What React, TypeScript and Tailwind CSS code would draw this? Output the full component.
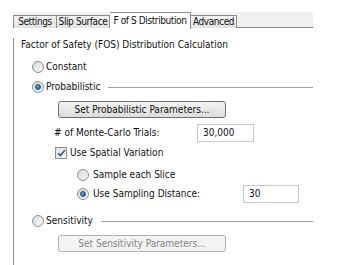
import React from "react";

const tabs = [
  { label: "Settings", w: "w-[44px]", active: false, first: true },
  { label: "Slip Surface", w: "w-[53px]", active: false, first: false },
  { label: "F of S Distribution", w: "w-[81px]", active: true, first: false },
  { label: "Advanced", w: "w-[46px]", active: false, first: false },
];

const Radio = ({ checked }: { checked?: boolean }) => (
  <span className="flex h-[12px] w-[12px] shrink-0 items-center justify-center rounded-full border border-[#8e8f8f] bg-gradient-to-br from-[#d9d9d9] to-[#fafafa]">
    {checked && (
      <span className="h-[6px] w-[6px] rounded-full border border-[#1d4a7a] bg-gradient-to-br from-[#7ab3e6] to-[#1b5fa6]" />
    )}
  </span>
);

const Checkbox = () => (
  <span className="flex h-[12px] w-[12px] shrink-0 items-center justify-center border border-[#8e8f8f] bg-gradient-to-br from-[#e3e3e3] to-[#fbfbfb]">
    <svg width="9" height="8" viewBox="0 0 9 8">
      <path d="M1 4.2 L3.4 6.6 L8 1" fill="none" stroke="#2a5896" strokeWidth="1.6" />
    </svg>
  </span>
);

const GroupLine = () => <div className="ml-[8px] h-px flex-1 bg-[#a0a0a0]" />;

export default function App() {
  return (
    <div
      className="relative h-[265px] w-[357px] overflow-hidden bg-white text-[10px] leading-[14px] text-[#111]"
      style={{ fontFamily: "Tahoma, 'DejaVu Sans Condensed', 'Liberation Sans', sans-serif" }}
    >
      {/* tab strip */}
      <div className="ml-[13px] mt-[12px] flex h-[17px] w-[300px] items-start tracking-[-0.4px]">
        {tabs.map((t) =>
          t.active ? (
            <div
              key={t.label}
              className={`${t.w} relative z-10 flex h-[17px] items-center justify-center whitespace-nowrap border-r border-t border-[#898c95] bg-white`}
            >
              {t.label}
            </div>
          ) : (
            <div key={t.label} className={`${t.w} h-[16px] border-b border-[#898c95] bg-[#f0f0f0] pt-[3px]`}>
              <div
                className={`flex h-[13px] items-center justify-center whitespace-nowrap border-r border-t border-[#898c95] bg-gradient-to-b from-[#f2f2f2] to-[#e3e3e3] ${
                  t.first ? "border-l" : ""
                }`}
              >
                {t.label}
              </div>
            </div>
          )
        )}
        <div className="h-[16px] flex-1 border-b border-[#898c95] bg-[#f0f0f0]" />
      </div>

      {/* panel */}
      <div className="ml-[13px] -mt-px h-[229px] w-[300px] border-l border-[#898c95] bg-white pl-[7px]">
        <div className="mt-[10px] h-[14px]">Factor of Safety (FOS) Distribution Calculation</div>

        <div className="ml-[11px] mt-[8px] flex h-[14px] items-center">
          <Radio />
          <span className="ml-[2px]">Constant</span>
        </div>

        <div className="ml-[11px] mt-[6px] flex h-[14px] items-center">
          <Radio checked />
          <span className="ml-[2px]">Probabilistic</span>
          <GroupLine />
        </div>

        <button className="ml-[37px] mt-[7px] flex h-[17px] w-[168px] items-center justify-center rounded-[3px] border border-[#707070] bg-gradient-to-b from-[#f3f3f3] to-[#dcdcdc]">
          Set Probabilistic Parameters...
        </button>

        <div className="ml-[33px] mt-[6px] flex h-[18px] items-center">
          <span className="w-[142px]">&#35; of Monte-Carlo Trials:</span>
          <div className="ml-[1px] flex h-[18px] w-[57px] items-center border border-[#c5c9d0] pl-[5px]">30,000</div>
        </div>

        <div className="ml-[34px] mt-[4px] flex h-[14px] items-center">
          <Checkbox />
          <span className="ml-[3px]">Use Spatial Variation</span>
        </div>

        <div className="ml-[56px] mt-[8px] flex h-[14px] items-center">
          <Radio />
          <span className="ml-[4px]">Sample each Slice</span>
        </div>

        <div className="ml-[56px] mt-[3px] flex h-[18px] items-center">
          <Radio checked />
          <span className="ml-[4px] w-[150px]">Use Sampling Distance:</span>
          <div className="flex h-[18px] w-[56px] items-center border border-[#c5c9d0] pl-[5px]">30</div>
        </div>

        <div className="ml-[11px] mt-[11px] flex h-[14px] items-center">
          <Radio />
          <span className="ml-[2px]">Sensitivity</span>
          <GroupLine />
        </div>

        <button className="ml-[37px] mt-[7px] flex h-[17px] w-[168px] items-center justify-center rounded-[3px] border border-[#adb2b5] bg-[#f4f4f4] text-[#838383]">
          Set Sensitivity Parameters...
        </button>
      </div>
    </div>
  );
}
